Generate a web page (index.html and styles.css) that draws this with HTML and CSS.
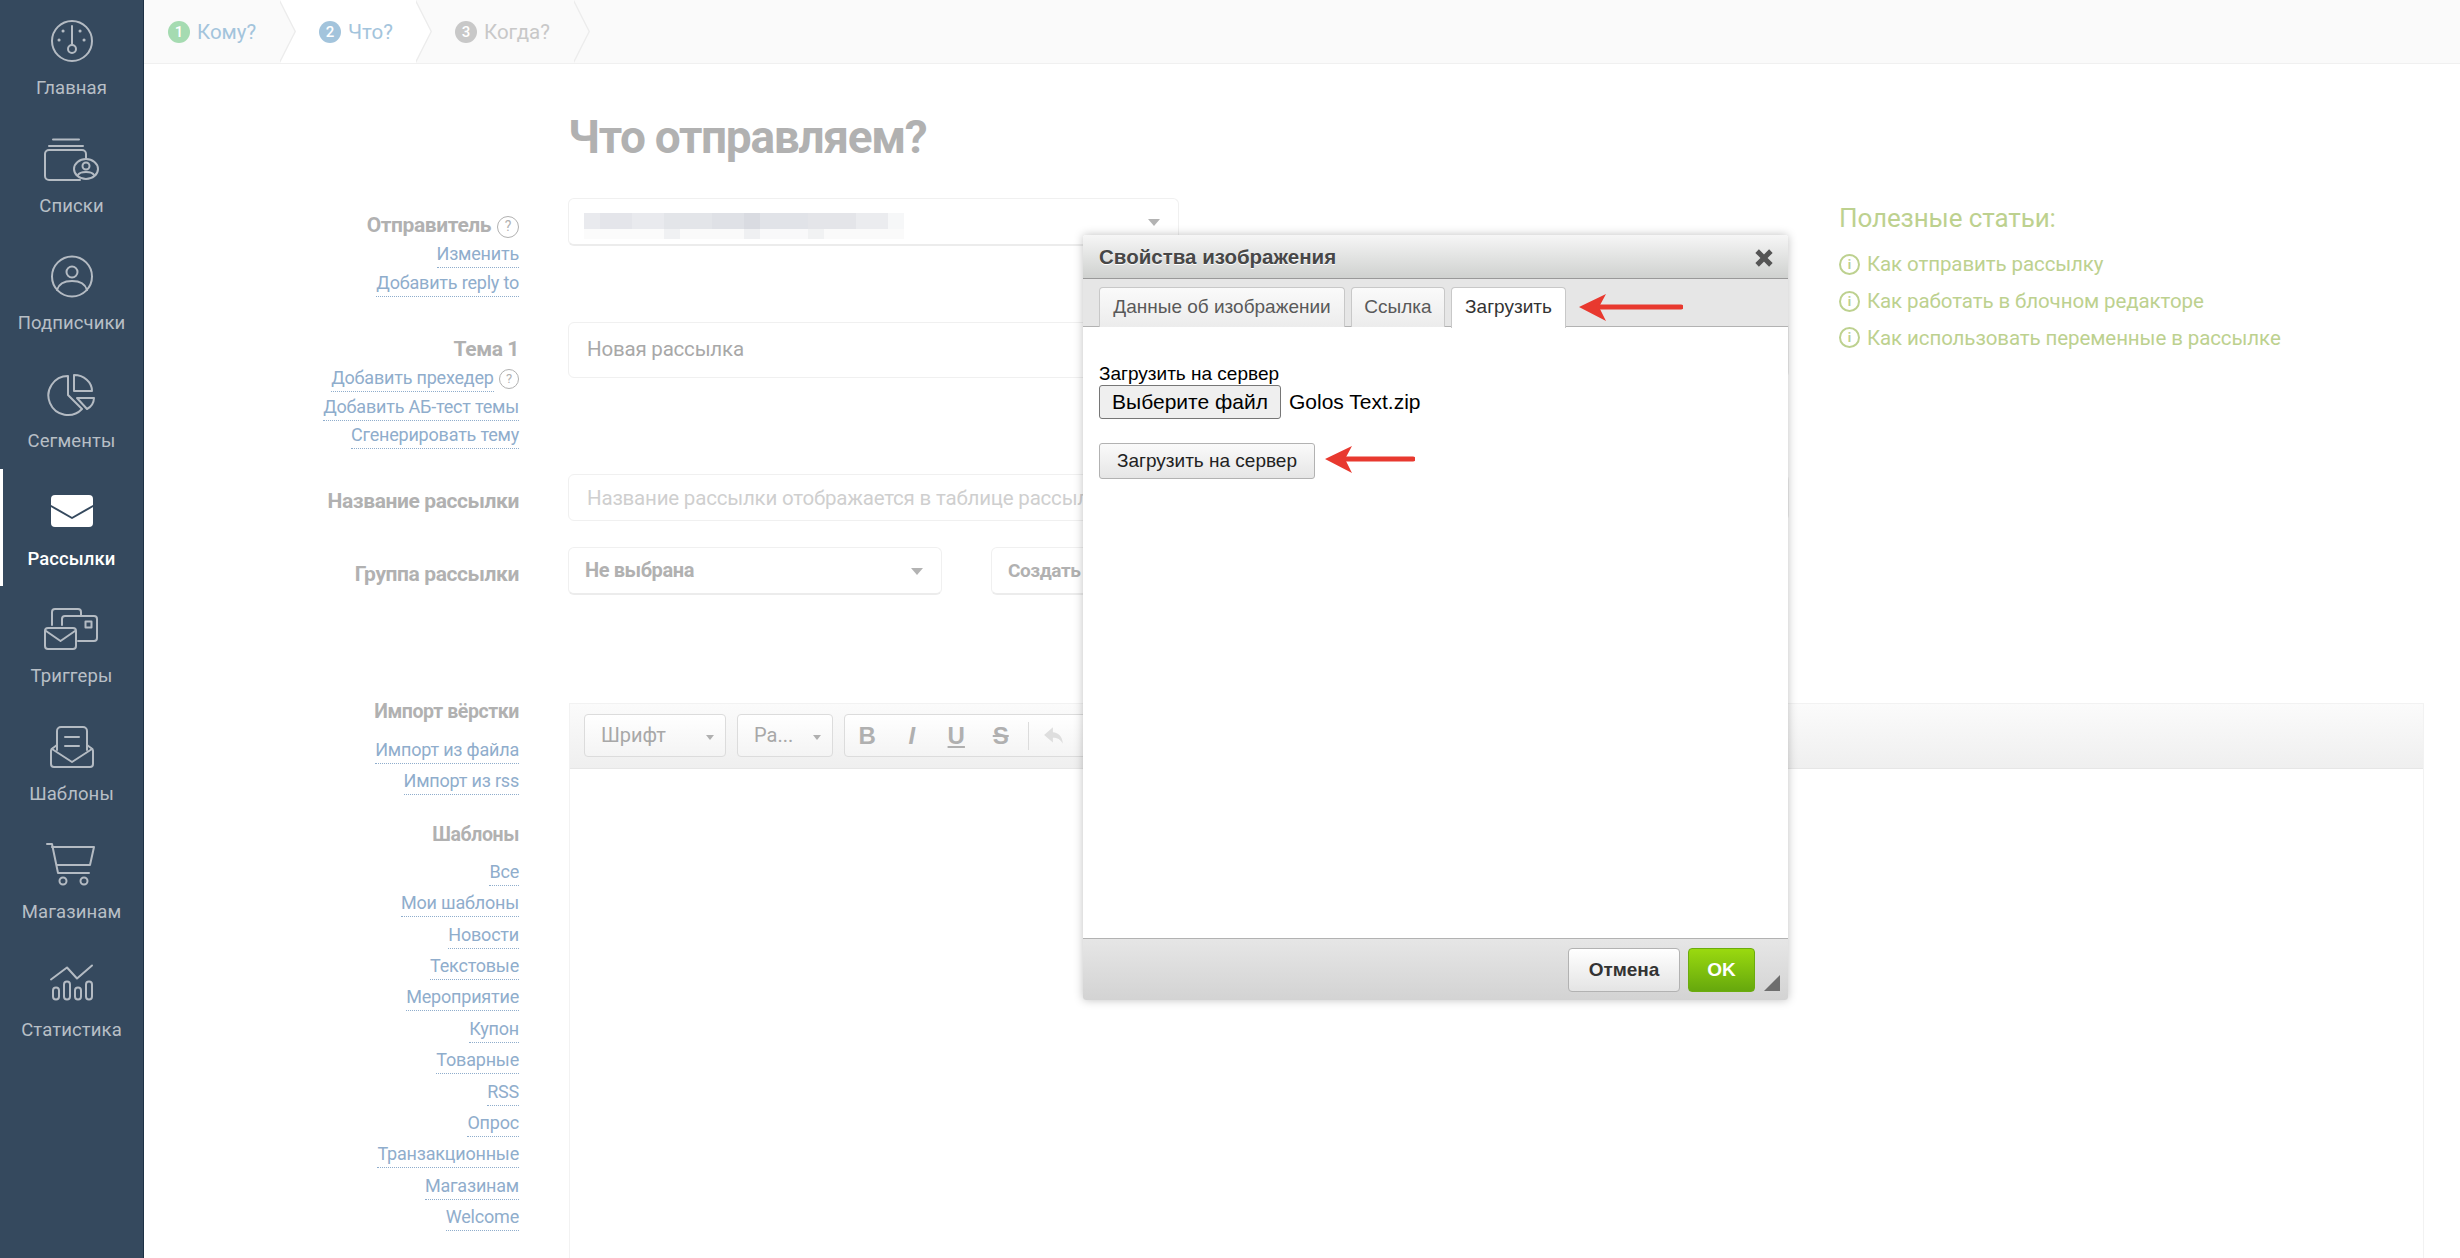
FILE: index.html
```html
<!DOCTYPE html>
<html lang="ru">
<head>
    <meta charset="UTF-8">
    <title>Что отправляем?</title>
    <link rel="stylesheet" href="styles.css">
</head>
<body>
    <div class="page">
        <nav class="sidebar">
            <a class="nav-item">
                <svg viewBox="0 0 60 46"><circle cx="30" cy="23" r="20"/><path d="M30 8V27"/><circle cx="30" cy="31" r="4"/><path class="dot" d="M21 13h.1M38 13h.1M17 22h.1M42 22h.1"/></svg>
                <span>Главная</span>
            </a>
            <a class="nav-item">
                <svg viewBox="0 0 60 46"><path d="M11 3.5H37M7 10H41"/><path d="M38 44H7a4 4 0 0 1-4-4V18a4 4 0 0 1 4-4H40a4 4 0 0 1 4 4v4"/><ellipse cx="44" cy="33" rx="12" ry="10"/><circle cx="44" cy="30" r="3.5"/><path d="M36 39c2-4 14-4 16 0"/></svg>
                <span>Списки</span>
            </a>
            <a class="nav-item">
                <svg viewBox="0 0 60 46"><circle cx="30" cy="23.5" r="20"/><circle cx="30" cy="19" r="5.5"/><path d="M15 37c2-7 8-9 15-9s13 2 15 9"/></svg>
                <span>Подписчики</span>
            </a>
            <a class="nav-item">
                <svg viewBox="0 0 60 46"><path d="M26 5A19.5 19.5 0 1 0 40 38L26 24Z"/><path d="M32 4A18 16 0 0 1 50 20H32Z"/><path d="M35 27H52A13 13 0 0 1 45 38Z"/></svg>
                <span>Сегменты</span>
            </a>
            <a class="nav-item active">
                <svg viewBox="0 0 60 46"><rect class="solid" x="9" y="6" width="42" height="32" rx="4"/><path class="cut" d="M9 17L30 29L51 17"/></svg>
                <span>Рассылки</span>
            </a>
            <a class="nav-item">
                <svg viewBox="0 0 60 46"><path d="M10 19V6a3 3 0 0 1 3-3H36a3 3 0 0 1 3 3v3"/><path d="M20 19V13a3 3 0 0 1 3-3H52a3 3 0 0 1 3 3V32a3 3 0 0 1-3 3H36"/><rect x="43.5" y="15.5" width="6" height="6"/><rect x="3" y="22" width="31" height="21" rx="3"/><path d="M4 25L18.500 35L33 25"/></svg>
                <span>Триггеры</span>
            </a>
            <a class="nav-item">
                <svg viewBox="0 0 60 46"><path d="M15 26V7a4 4 0 0 1 4-4H41a4 4 0 0 1 4 4V26"/><path d="M23 13H37M23 22H37"/><path d="M15 21L11 24a3 3 0 0 0-2 3V40a3 3 0 0 0 3 3H48a3 3 0 0 0 3-3V27a3 3 0 0 0-2-3L45 21"/><path d="M10 25L30 38L50 25"/></svg>
                <span>Шаблоны</span>
            </a>
            <a class="nav-item">
                <svg viewBox="0 0 60 46"><path d="M5 2H10L16 31H47"/><path d="M10 5L52 5L48 23H15"/><circle cx="21" cy="39" r="3.500"/><circle cx="42" cy="39" r="3.500"/></svg>
                <span>Магазинам</span>
            </a>
            <a class="nav-item">
                <svg viewBox="0 0 60 46"><path d="M9 19.500L25 7.500L35 18.500L50 5.500"/><rect x="11" y="27.500" width="6" height="12" rx="3"/><rect x="22" y="21.500" width="6" height="18" rx="3"/><rect x="33" y="27.500" width="6" height="12" rx="3"/><rect x="44" y="21.500" width="6" height="18" rx="3"/></svg>
                <span>Статистика</span>
            </a>
        </nav>

        <main class="main">
            <div class="steps">
                <div class="step"><span class="num num-done">1</span>Кому?</div>
                <div class="step step-current"><span class="num num-current">2</span>Что?</div>
                <div class="step step-last"><span class="num num-next">3</span>Когда?</div>
            </div>

            <div class="top">
                <div class="form">
                    <h1 class="title">Что отправляем?</h1>

                    <div class="row row-sender">
                        <div class="side">
                            <div class="side-label">Отправитель <i class="help">?</i></div>
                            <div class="side-link"><a>Изменить</a></div>
                            <div class="side-link"><a>Добавить reply to</a></div>
                        </div>
                        <div class="select select-wide">
                            <div class="blurred"></div>
                            <div class="blurred blurred-low"></div>
                            <b class="caret"></b>
                        </div>
                    </div>

                    <div class="row row-subject">
                        <div class="side">
                            <div class="side-label">Тема 1</div>
                            <div class="side-link"><a>Добавить прехедер</a> <i class="help">?</i></div>
                            <div class="side-link"><a>Добавить АБ-тест темы</a></div>
                            <div class="side-link"><a>Сгенерировать тему</a></div>
                        </div>
                        <div class="input input-tall">Новая рассылка</div>
                    </div>

                    <div class="row row-name">
                        <div class="side"><div class="side-label">Название рассылки</div></div>
                        <div class="input placeholder">Название рассылки отображается в таблице рассылок</div>
                    </div>

                    <div class="row row-group">
                        <div class="side"><div class="side-label">Группа рассылки</div></div>
                        <div class="group-fields">
                            <div class="select select-group">Не выбрана<b class="caret"></b></div>
                            <div class="select select-create">Создать группу</div>
                        </div>
                    </div>
                </div>

                <aside class="tips">
                    <h3>Полезные статьи:</h3>
                    <p><i class="info">i</i>Как отправить рассылку</p>
                    <p><i class="info">i</i>Как работать в блочном редакторе</p>
                    <p><i class="info">i</i>Как использовать переменные в рассылке</p>
                </aside>
            </div>

            <div class="row">
                <div class="side">
                    <div class="side-label side-label-import">Импорт вёрстки</div>
                    <div class="side-link side-link-import"><a>Импорт из файла</a></div>
                    <div class="side-link side-link-import"><a>Импорт из rss</a></div>
                    <div class="side-label side-label-tpl">Шаблоны</div>
                    <div class="side-link side-link-tpl"><a>Все</a></div>
                    <div class="side-link side-link-tpl"><a>Мои шаблоны</a></div>
                    <div class="side-link side-link-tpl"><a>Новости</a></div>
                    <div class="side-link side-link-tpl"><a>Текстовые</a></div>
                    <div class="side-link side-link-tpl"><a>Мероприятие</a></div>
                    <div class="side-link side-link-tpl"><a>Купон</a></div>
                    <div class="side-link side-link-tpl"><a>Товарные</a></div>
                    <div class="side-link side-link-tpl"><a>RSS</a></div>
                    <div class="side-link side-link-tpl"><a>Опрос</a></div>
                    <div class="side-link side-link-tpl"><a>Транзакционные</a></div>
                    <div class="side-link side-link-tpl"><a>Магазинам</a></div>
                    <div class="side-link side-link-tpl"><a>Welcome</a></div>
                </div>
                <div class="editor">
                    <div class="toolbar">
                        <div class="combo combo-font">Шрифт<b></b></div>
                        <div class="combo combo-size">Ра...<b></b></div>
                        <div class="tool-group">
                            <span class="tool tool-b">B</span>
                            <span class="tool tool-i">I</span>
                            <span class="tool tool-u">U</span>
                            <span class="tool tool-s">S</span>
                            <span class="tool-sep"></span>
                            <svg class="tool-undo" viewBox="0 0 20 18"><path d="M9 1L1 8L9 15V10.500C13 10.500 16 12 18 16C18 10 14 5.500 9 5.500Z"/></svg>
                        </div>
                    </div>
                </div>
            </div>
        </main>
    </div>

    <div class="dialog">
        <div class="dialog-title">
            Свойства изображения
            <svg class="dialog-close" viewBox="0 0 16 16"><path d="M2.500 2.500L13.500 13.500M13.500 2.500L2.500 13.500"/></svg>
        </div>
        <div class="dialog-tabs">
            <div class="tab tab-data">Данные об изображении</div>
            <div class="tab tab-link">Ссылка</div>
            <div class="tab tab-active">Загрузить</div>
            <svg class="arrow arrow-tab" viewBox="0 0 104 28"><path class="arrow-head" d="M0 13L27 0L20 13L27 27Z"/><path class="arrow-line" d="M20 13H102"/></svg>
        </div>
        <div class="dialog-body">
            <div class="upload-label">Загрузить на сервер</div>
            <div class="file-row">
                <button class="file-button">Выберите файл</button>
                <span class="file-name">Golos Text.zip</span>
            </div>
            <div class="upload-row">
                <button class="upload-button">Загрузить на сервер</button>
                <svg class="arrow arrow-upload" viewBox="0 0 90 28"><path class="arrow-head" d="M0 13L27 0L20 13L27 27Z"/><path class="arrow-line" d="M20 13H88"/></svg>
            </div>
        </div>
        <div class="dialog-footer">
            <button class="btn-cancel">Отмена</button>
            <button class="btn-ok">OK</button>
            <svg class="resizer" viewBox="0 0 16 16"><path d="M16 0V16H0Z"/></svg>
        </div>
    </div>
</body>
</html>
```

FILE: styles.css
```css
body {
    margin: 0;
    font-family: Roboto, sans-serif;
    background-color: #fff;
    overflow: hidden;
}

.page {
    display: flex;
    height: 1258px;
    overflow: hidden;
}

/* left menu */
.sidebar {
    width: 143px;
    flex-shrink: 0;
    margin-top: -2px;
    background-color: #35495e;
    border-right: 1px solid #1d3145;
}

.nav-item {
    display: flex;
    flex-direction: column;
    align-items: center;
    box-sizing: border-box;
    height: 117.7px;
    padding-top: 20px;
    color: #b8bfc6;
    font-size: 18.5px;
    line-height: 24px;
    letter-spacing: 0.1px;
}

.nav-item svg {
    width: 60px;
    height: 46px;
    margin-bottom: 12px;
    fill: none;
    stroke: #b4bbc3;
    stroke-width: 2;
    stroke-linecap: round;
    stroke-linejoin: round;
}

.nav-item .dot {
    stroke-width: 3;
}

.nav-item.active {
    color: #fff;
    font-weight: 500;
    box-shadow: inset 3px 0 0 #fff;
}

.nav-item .solid {
    fill: #fff;
    stroke: none;
}

.nav-item .cut {
    stroke: #35495e;
}

.main {
    flex: 1;
    min-width: 0;
}

/* steps on top */
.steps {
    display: flex;
    height: 63px;
    background-color: #fafafa;
    border-bottom: 1px solid #f0f0f0;
    font-size: 20.5px;
    color: #a3c4dc;
}

.step {
    display: flex;
    align-items: center;
    position: relative;
    box-sizing: border-box;
    width: 136px;
    padding-left: 24px;
    background-color: #fafafa;
}

.step-current {
    padding-left: 39px;
    background-color: #fff;
}

.step-last {
    width: 158px;
    padding-left: 39px;
    color: #c8c8c8;
}

/* chevron between the steps */
.step::before, .step::after {
    content: "";
    position: absolute;
    top: 0;
    width: 16px;
    height: 63px;
    clip-path: polygon(0 0, 100% 50%, 0 100%);
}

.step::after {
    right: -16px;
    background-color: #ececec;
    z-index: 1;
}

.step::before {
    right: -14.500px;
    background-color: inherit;
    z-index: 2;
}

.num {
    width: 22px;
    height: 22px;
    margin-right: 7px;
    border-radius: 50%;
    color: #fff;
    font-size: 15px;
    font-weight: 500;
    line-height: 22px;
    text-align: center;
}

.num-done { background-color: #a5dbb1; }
.num-current { background-color: #a3c4dc; }
.num-next { background-color: #c8c8c8; }

/* form */
.top {
    display: flex;
}

.form {
    width: 1645px;
    flex-shrink: 0;
}

.title {
    height: 56px;
    margin: 45px 0 33px 424px;
    color: #b1b1b1;
    font-size: 46px;
    font-weight: 700;
    line-height: 56px;
    letter-spacing: -1.3px;
}

.row {
    display: grid;
    grid-template-columns: 375px 1fr;
    column-gap: 49px;
}

.row-sender { height: 124px; }
.row-subject { height: 152px; }
.row-name { height: 73px; }
.row-group { height: 152px; }

.side {
    text-align: right;
    color: #8fadcc;
    font-size: 18px;
    letter-spacing: -0.2px;
}

.side-label {
    padding-top: 14px;
    padding-bottom: 2px;
    color: #b1b1b1;
    font-size: 21px;
    font-weight: 700;
    line-height: 26px;
    letter-spacing: -0.4px;
}

.side-link {
    height: 28.500px;
    line-height: 28.500px;
}

.side-link a {
    padding-bottom: 3px;
    border-bottom: 1px dotted #8fadcc;
}

.help {
    display: inline-block;
    box-sizing: border-box;
    width: 20px;
    height: 20px;
    margin-left: 1px;
    border: 1.500px solid #b1b1b1;
    border-radius: 50%;
    color: #b1b1b1;
    font-size: 13px;
    font-style: normal;
    font-weight: 400;
    line-height: 17px;
    letter-spacing: 0;
    text-align: center;
    vertical-align: 1px;
}

.side-label .help {
    width: 22px;
    height: 22px;
    font-size: 14px;
    line-height: 19px;
}

.input, .select {
    box-sizing: border-box;
    border: 1.500px solid #f0f0f0;
    border-radius: 6px;
    background-color: #fff;
    font-size: 20.500px;
    letter-spacing: -0.2px;
}

.input {
    height: 47px;
    padding: 0 18px;
    color: #a8a8a8;
    line-height: 46px;
}

.input-tall {
    height: 56px;
    line-height: 52px;
}

.placeholder {
    color: #cfcfcf;
}

.select {
    position: relative;
    height: 48px;
    border-bottom: 2px solid #ececec;
}

.select-wide {
    width: 611px;
    padding: 14px 0 0 15px;
}

/* sender name is pixelated in the screenshot */
.blurred {
    width: 320px;
    height: 16px;
    background: linear-gradient(90deg,
        #e9eaee 0 5%, #e4e5ea 5% 15%, #e9eaee 15% 25%, #e3e5e9 25% 40%,
        #dfe1e6 40% 50%, #d9dbe1 50% 55%, #e1e3e8 55% 70%, #e4e5e9 70% 85%,
        #ebecef 85% 95%, #f6f7f8 95% 100%);
}

.blurred-low {
    height: 10px;
    background: linear-gradient(90deg,
        #fbfbfb 0 25%, #f0f1f3 25% 30%, #fafafa 30% 50%, #eff0f2 50% 55%,
        #f9f9fa 55% 70%, #f1f2f3 70% 75%, #fafafa 75% 100%);
}

.caret {
    position: absolute;
    top: 20px;
    right: 18px;
    border-top: 7px solid #b3b3b3;
    border-left: 6px solid transparent;
    border-right: 6px solid transparent;
}

.group-fields {
    display: flex;
    column-gap: 49px;
}

.select-group {
    width: 374px;
    padding-left: 16px;
    color: #b1b1b1;
    font-weight: 700;
    line-height: 45px;
    font-size: 20px;
    letter-spacing: -0.4px;
}

.select-create {
    width: 300px;
    padding-left: 16px;
    color: #b1b1b1;
    font-weight: 700;
    line-height: 45px;
    font-size: 19px;
    letter-spacing: -0.4px;
}

/* tips */
.tips {
    margin-left: 50px;
    padding-top: 139px;
    color: #bdd18f;
    font-size: 20.500px;
    letter-spacing: -0.1px;
}

.tips h3 {
    margin: 0 0 13px;
    font-size: 26px;
    font-weight: 400;
    line-height: 30px;
}

.tips p {
    display: flex;
    align-items: center;
    height: 36.800px;
    margin: 0;
    line-height: 24px;
}

.info {
    width: 21px;
    height: 21px;
    box-sizing: border-box;
    margin-right: 7px;
    border: 2px solid #bdd18f;
    border-radius: 50%;
    font-size: 13px;
    font-style: normal;
    font-weight: 700;
    line-height: 17px;
    text-align: center;
}

/* editor */
.side-label-import {
    padding-top: 0;
    padding-bottom: 0;
    font-size: 19.500px;
}

.side-link-import {
    height: 31.400px;
    line-height: 31.400px;
}

.side-label-import + .side-link-import {
    margin-top: 9px;
}

.side-label-tpl {
    padding-top: 25px;
    padding-bottom: 8px;
    font-size: 19.500px;
}

.side-link-tpl {
    height: 31.400px;
    line-height: 31.400px;
}

.editor {
    box-sizing: border-box;
    width: 1855px;
    height: 560px;
    margin-left: 1px;
    margin-top: 4px;
    border: 1px solid #f2f2f2;
}

.toolbar {
    display: flex;
    column-gap: 11px;
    box-sizing: border-box;
    height: 65px;
    padding: 10px 0 0 14px;
    background: linear-gradient(#fbfbfb, #efefef);
    border-bottom: 1px solid #e6e6e6;
}

.combo, .tool-group {
    position: relative;
    box-sizing: border-box;
    height: 43px;
    border: 1px solid #dcdcdc;
    border-radius: 4px;
    background: linear-gradient(#fff, #f4f4f4);
    color: #a8a8a8;
    font-size: 20px;
    line-height: 41px;
    padding-left: 16px;
}

.combo b {
    position: absolute;
    top: 20px;
    right: 11px;
    border-top: 5px solid #b0b0b0;
    border-left: 4px solid transparent;
    border-right: 4px solid transparent;
}

.combo-font { width: 142px; }
.combo-size { width: 96px; }

.tool-group {
    display: flex;
    align-items: center;
    width: 300px;
    padding-left: 0;
    color: #b0b0b0;
}

.tool {
    width: 44.500px;
    text-align: center;
    font-family: "Liberation Sans", sans-serif;
    font-size: 24px;
    font-weight: 700;
}

.tool-i { font-style: italic; }
.tool-u { text-decoration: underline; }
.tool-s { text-decoration: line-through; }

.tool-sep {
    width: 1px;
    height: 28px;
    margin: 0 14px 0 5px;
    background-color: #dcdcdc;
}

.tool-undo {
    width: 22px;
    height: 20px;
    fill: #dedede;
}

/* image dialog on top of the page */
.dialog {
    position: absolute;
    top: 235px;
    left: 1083px;
    display: flex;
    flex-direction: column;
    box-sizing: border-box;
    width: 705px;
    height: 765px;
    border-radius: 3px;
    background-color: #fff;
    box-shadow: 0 0 10px rgba(0, 0, 0, 0.25);
    font-family: "Liberation Sans", sans-serif;
}

.dialog-title {
    position: relative;
    box-sizing: border-box;
    height: 44px;
    padding-left: 16px;
    background: linear-gradient(#f6f6f6, #cfd1cf);
    border-bottom: 1px solid #999;
    border-radius: 3px 3px 0 0;
    color: #474747;
    font-size: 20.500px;
    font-weight: 700;
    line-height: 44px;
    text-shadow: 0 1px 0 #fff;
}

.dialog-close {
    position: absolute;
    top: 13px;
    right: 14px;
    width: 20px;
    height: 20px;
    fill: none;
    stroke: #555;
    stroke-width: 4;
}

.dialog-tabs {
    display: flex;
    position: relative;
    box-sizing: border-box;
    height: 48px;
    padding: 8px 0 0 16px;
    background-color: #e6e6e6;
    border-bottom: 1px solid #b2b2b2;
}

.tab {
    box-sizing: border-box;
    height: 40px;
    margin-right: 6px;
    border: 1px solid #c8c8c8;
    border-bottom: 0;
    border-radius: 4px 4px 0 0;
    background: linear-gradient(#fafafa, #ececec);
    color: #595959;
    font-size: 19px;
    line-height: 38px;
    text-align: center;
}

.tab-data { width: 246px; }
.tab-link { width: 94px; }

.tab-active {
    width: 115px;
    height: 41px;
    background: #fff;
    color: #333;
}

.arrow {
    position: absolute;
}

.arrow-head { fill: #e8392f; }

.arrow-line {
    fill: none;
    stroke: #e8392f;
    stroke-width: 5;
    stroke-linecap: round;
}

.arrow-tab {
    top: 15px;
    left: 496px;
    width: 104px;
    height: 28px;
}

.dialog-body {
    flex: 1;
    padding: 36px 16px 0;
    color: #000;
}

.upload-label {
    height: 22px;
    font-size: 19px;
    line-height: 22px;
}

.file-row {
    display: flex;
    align-items: center;
    height: 34px;
}

.file-button {
    box-sizing: border-box;
    width: 182px;
    height: 34px;
    margin-right: 8px;
    padding: 0;
    border: 1px solid #767676;
    border-radius: 3px;
    background-color: #efefef;
    color: #000;
    font-family: inherit;
    font-size: 21px;
}

.file-name {
    font-size: 21px;
}

.upload-row {
    position: relative;
    margin-top: 24px;
}

.upload-button {
    box-sizing: border-box;
    width: 216px;
    height: 36px;
    padding: 0;
    border: 1px solid #b2b2b2;
    border-radius: 3px;
    background: linear-gradient(#fafafa, #e6e6e6);
    color: #222;
    font-family: inherit;
    font-size: 19px;
}

.arrow-upload {
    top: 3px;
    left: 226px;
    width: 90px;
    height: 28px;
}

.dialog-footer {
    position: relative;
    display: flex;
    column-gap: 8px;
    box-sizing: border-box;
    height: 62px;
    padding: 9px 0 0 485px;
    background: linear-gradient(#e6e6e6, #d3d3d3);
    border-top: 1px solid #b2b2b2;
    border-radius: 0 0 3px 3px;
}

.btn-cancel, .btn-ok {
    box-sizing: border-box;
    height: 44px;
    padding: 0;
    border-radius: 4px;
    font-family: inherit;
    font-size: 19px;
    font-weight: 700;
}

.btn-cancel {
    width: 112px;
    border: 1px solid #b2b2b2;
    background: linear-gradient(#fff, #e4e4e4);
    color: #333;
}

.btn-ok {
    width: 67px;
    border: 1px solid #6bac0d;
    background: linear-gradient(#9ad90f, #66a80d);
    color: #fff;
}

.resizer {
    position: absolute;
    top: 36px;
    right: 8px;
    width: 16px;
    height: 16px;
    fill: #6e6e6e;
}
```
